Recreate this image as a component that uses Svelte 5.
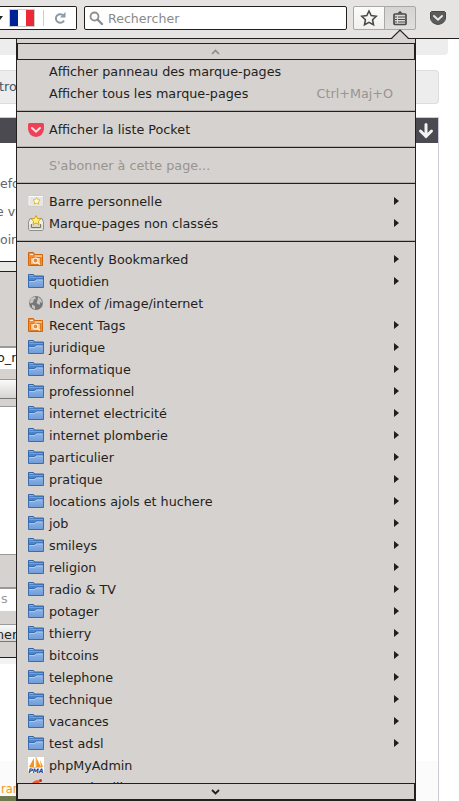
<script lang="ts">
  type Item = { label: string; icon?: string; arrow?: boolean; shortcut?: string; disabled?: boolean };

  const folder = (label: string): Item => ({ label, icon: 'folder', arrow: true });

  // Each group is followed by a separator
  const groups: Item[][] = [
    [
      { label: 'Afficher panneau des marque-pages' },
      { label: 'Afficher tous les marque-pages', shortcut: 'Ctrl+Maj+O' },
    ],
    [{ label: 'Afficher la liste Pocket', icon: 'pocket' }],
    [{ label: "S'abonner à cette page...", disabled: true }],
    [
      { label: 'Barre personnelle', icon: 'toolbar', arrow: true },
      { label: 'Marque-pages non classés', icon: 'unsorted', arrow: true },
    ],
    [
      { label: 'Recently Bookmarked', icon: 'smart', arrow: true },
      folder('quotidien'),
      { label: 'Index of /image/internet', icon: 'globe' },
      { label: 'Recent Tags', icon: 'smart', arrow: true },
      ...[
        'juridique', 'informatique', 'professionnel', 'internet electricité',
        'internet plomberie', 'particulier', 'pratique', 'locations ajols et huchere',
        'job', 'smileys', 'religion', 'radio & TV', 'potager', 'thierry', 'bitcoins',
        'telephone', 'technique', 'vacances', 'test adsl',
      ].map(folder),
      { label: 'phpMyAdmin', icon: 'pma' },
      { label: 'mental suili', icon: 'orange' },
    ],
  ];
</script>

{#snippet itemIcon(name: string)}
  <svg class="icon" viewBox="0 0 16 16">
    {#if name === 'folder'}
      <path d="M.5 13.500V1.500h5l1 1.500h9v6z" fill="#4d84c8" stroke="#3264a8" />
      <path d="M1 2.500h4.500" stroke="#86b3e9" />
      <path d="M1 4.500h14" stroke="#6ea0de" />
      <path d="M.5 14.500V7.500h6l1.500-1.500h7.500v8.500z" fill="url(#folderFill)" stroke="#3a6cb0" />
      <path d="M1.500 8.500h5.500l1.500-1.500h6" fill="none" stroke="#a9caf0" />
    {:else if name === 'smart'}
      <path d="M.5 14.500v-13h5l1 2h8v11z" fill="#f58f35" stroke="#d2650b" />
      <path d="M2.500 13.500v-7h10v7z" fill="#fac084" stroke="#e07a20" />
      <path d="M2 3.500h3M7 5h7" stroke="#fff0dd" />
      <circle cx="7.500" cy="9.500" r="2.500" fill="#e9893a" stroke="#fff3e4" stroke-width="1.200" />
      <path d="m9.500 11.500 2.500 2" stroke="#fff3e4" stroke-width="1.400" />
    {:else if name === 'pocket'}
      <path d="M1.500 2h13Q16 2 16 3.500V8Q15 15.500 8 16 1 15.500 0 8V3.500Q0 2 1.500 2z" fill="#ee4056" />
      <path d="m4 7 4 3.700L12 7" fill="none" stroke="#f4e4e1" stroke-width="2" stroke-linecap="round" />
    {:else if name === 'toolbar'}
      <path d="M.5 2.500h15v11H.5z" fill="#e7e6e4" stroke="#cfccc9" />
      <path d="M1 3.500h14M1 3v9" stroke="#fafafa" />
      <path d="m8.500 4.500 1.200 2 2.300.5-1.500 1.800.2 2.200-2.200-.8-2.200.8.2-2.200L5 7l2.300-.5z" fill="#fffbd9" stroke="#e0be44" />
    {:else if name === 'unsorted'}
      <path d="m.5 7 1.500-3.500h12l1.500 3.500v7l-1 1.500h-13l-1-1.500z" fill="#efefed" stroke="#8f8f8a" />
      <path d="M1.500 9.500h13v4.500h-13z" fill="#d5d5d0" />
      <path d="M3.500 9v3.500h9V9" fill="none" stroke="#777772" />
      <path d="m8 .5 1.500 3 3.300.5-2.400 2.300.6 3.300-3-1.600-3 1.600.6-3.300L3.200 4l3.300-.5z" fill="#fff076" stroke="#d5a514" />
    {:else if name === 'globe'}
      <circle cx="8" cy="8" r="7" fill="#777" />
      <path d="m3 3 4-1.500 1 2-2 1-1 3-3 1L1.500 7zM10 2l3 2 1.500 4-2-1-1 3-3-2 1-3zM4 9.500l3 1.500v3.500l-3-2z" fill="#c4c3c1" />
    {:else if name === 'pma'}
      <path d="M0 0h16v16H0z" fill="#fff" />
      <path d="M6 1 1 10h5zM8 0v10h5zM12 3l3 7h-2z" fill="#f79415" />
      <path d="M8 0v10M2 10.500h12" stroke="#f8c681" />
      <text x="0.500" y="15.700" font-size="6.200" font-weight="bold" font-style="italic" textLength="15" fill="#343477">PMA</text>
    {:else}
      <path d="M3 5q3-4 7.500-4l1.500 4z" fill="#ee5b27" />
      <circle cx="12.500" cy="1.500" r="1.500" fill="#d71d25" />
    {/if}
  </svg>
{/snippet}

<svg class="defs" width="0" height="0">
  <defs>
    <linearGradient id="folderFill" x2="0" y2="1">
      <stop offset="0" stop-color="#8db5e8" />
      <stop offset="1" stop-color="#6e9bd8" />
    </linearGradient>
  </defs>
</svg>

<div class="window">
  <header class="toolbar">
    <div class="urlbar">
      <svg class="caret" width="3" height="4" viewBox="0 0 3 4"><path d="M0 0h3L0 4z" fill="#222" /></svg>
      <div class="flag"><i></i><i></i><i></i></div>
      <svg class="reload" width="12" height="12" viewBox="0 0 12 12">
        <path d="M10 8.500A4.300 4.300 0 1 1 8.800 3" fill="none" stroke="#8a9aa6" stroke-width="2" />
        <path d="M11.500 0v5.500H6z" fill="#8a9aa6" />
      </svg>
    </div>
    <div class="search">
      <svg width="15" height="15" viewBox="0 0 15 15">
        <circle cx="5.500" cy="5.500" r="4" fill="none" stroke="#8e8e8e" stroke-width="1.800" />
        <path d="m8.500 8.500 4.500 4.500" stroke="#8e8e8e" stroke-width="2.400" stroke-linecap="round" />
      </svg>
      <span>Rechercher</span>
    </div>
    <div class="buttons">
      <div class="btn">
        <svg width="18" height="18" viewBox="0 0 18 18">
          <path d="m9 2 2.200 4.600 5 .7-3.600 3.500.9 5L9 13.400l-4.500 2.400.9-5L1.800 7.300l5-.7z" fill="none" stroke="#4a4a4a" stroke-width="1.600" />
        </svg>
      </div>
      <div class="btn open">
        <svg width="16" height="16" viewBox="0 0 16 16">
          <path d="M5 3.500 8 1l3 2.500" fill="#4a4a4a" />
          <rect x="2" y="4" width="12" height="10.500" rx="1" fill="none" stroke="#4a4a4a" stroke-width="1.700" />
          <path d="M3 7h2m1 0h7M3 9.500h2m1 0h7M3 12h2m1 0h7" stroke="#4a4a4a" stroke-width="1.200" />
        </svg>
      </div>
    </div>
    <svg class="pocket" width="16" height="14" viewBox="0 0 16 14">
      <path d="M1.500.5h13l1 1V7Q15 12.500 8 13.500 1 12.500.5 7V1.500z" fill="#5b5b5b" stroke="#484848" />
      <path d="m4 5 4 3.700L12 5" fill="none" stroke="#e8e8e8" stroke-width="2" stroke-linecap="round" />
    </svg>
  </header>

  <div class="page">
    <div class="tab"></div>
    <div class="crumbs">tro</div>
    <section class="panel">
      <div class="panel-head">
        <svg width="16" height="16" viewBox="0 0 16 16">
          <path d="M8 1.500v12M2.500 8 8 13.500 13.500 8" fill="none" stroke="#f3f3f3" stroke-width="3" stroke-linecap="round" />
        </svg>
      </div>
      <div class="copy">
        <p>efo</p>
        <p class="pull">e vu</p>
        <p>oir</p>
      </div>
      <div class="shot">
        <div class="strip"></div>
        <div class="gap"></div>
        <div class="field">o_r</div>
        <div class="small-gap"></div>
        <div class="bevel"></div>
        <div class="ledge"></div>
        <div class="blank"></div>
        <div class="mid"></div>
        <div class="field grey">s</div>
        <div class="fill"></div>
        <div class="bevel short">ner</div>
        <div class="last"></div>
      </div>
      <div class="after"></div>
      <div class="foot"><span>rar</span></div>
    </section>
  </div>

  <div class="menu">
    <svg class="tip" width="20" height="11" viewBox="0 0 20 11">
      <path d="m1 10.500 9-9 9 9V11H1z" fill="#d6d2cf" />
      <path d="M0 9.500h1.500L10 1l8.500 8.500H20" fill="none" stroke="#231f1d" stroke-width="1.200" />
    </svg>
    <div class="scroll up">
      <svg width="9" height="6" viewBox="0 0 9 6"><path d="m1 5 3.500-3.500L8 5" fill="none" stroke="#8f8b88" stroke-width="1.600" /></svg>
    </div>
    <div class="items">
      {#each groups as group, i}
        {#if i > 0}
          <div class="separator"></div>
        {/if}
        {#each group as item}
          <div class="item" class:disabled={item.disabled}>
            <div class="slot">
              {#if item.icon}
                {@render itemIcon(item.icon)}
              {/if}
            </div>
            <span class="label">{item.label}</span>
            {#if item.shortcut}
              <span class="shortcut">{item.shortcut}</span>
            {/if}
            {#if item.arrow}
              <svg class="arrow" width="5" height="8" viewBox="0 0 5 8"><path d="M0 0v8l5-4z" fill="#231f1d" /></svg>
            {/if}
          </div>
        {/each}
      {/each}
    </div>
    <div class="scroll down">
      <svg width="9" height="6" viewBox="0 0 9 6"><path d="m1 1 3.500 3.500L8 1" fill="none" stroke="#231f1d" stroke-width="1.800" /></svg>
    </div>
  </div>
</div>

<style>
  .window {
    position: relative;
    display: flex;
    flex-direction: column;
    width: 459px;
    height: 801px;
    overflow: hidden;
    background: #fff;
    font-family: 'DejaVu Sans', sans-serif;
    font-size: 12.75px;
    color: #231f1d;
  }

  .defs {
    position: absolute;
  }

  svg {
    display: block;
    flex: none;
  }

  /* Browser toolbar */
  .toolbar {
    display: flex;
    align-items: flex-start;
    flex: none;
    box-sizing: border-box;
    height: 39px;
    padding-top: 6px;
    background: #e5e4e2;
    border-bottom: 1px solid #231f1d;
  }

  .urlbar,
  .search {
    display: flex;
    align-items: center;
    box-sizing: border-box;
    height: 24px;
    background: #fff;
    border: 1px solid #231f1d;
    border-radius: 2px;
  }

  .urlbar {
    width: 77px;
    border-left: none;
    border-radius: 0 2px 2px 0;
  }

  .flag {
    display: flex;
    box-sizing: border-box;
    width: 26px;
    height: 18px;
    margin-left: 6px;
    border: 1px solid #ccc;
  }

  .flag i {
    flex: 1;
    background: #fff;
  }

  .flag i:first-child {
    background: #012395;
  }

  .flag i:last-child {
    background: #ed2939;
  }

  .reload {
    box-sizing: content-box;
    margin-left: 8px;
    padding: 2px 0 2px 10px;
    border-left: 1px solid #ccc;
  }

  .search {
    width: 263px;
    margin-left: 7px;
    padding-left: 4px;
    gap: 4px;
    font-size: 12.6px;
    color: #8a8a8a;
  }

  .buttons {
    display: flex;
    margin-left: 6px;
  }

  .btn {
    display: flex;
    align-items: center;
    justify-content: center;
    box-sizing: border-box;
    width: 32px;
    height: 24px;
    background: linear-gradient(#fbfbfa, #f1f0ef);
    border: 1px solid #aaa8a6;
    border-radius: 2px 0 0 2px;
  }

  .btn.open {
    background: linear-gradient(#d5d4d2, #e0dfdd);
    margin-left: -1px;
    border-radius: 0 2px 2px 0;
  }

  .pocket {
    margin: 5px 0 0 14px;
  }

  /* Web page under the menu */
  .page {
    display: flex;
    flex-direction: column;
    flex: 1;
    width: 448px;
  }

  .tab {
    height: 16px;
    background: #ededed;
    border-radius: 0 0 4px 0;
  }

  .crumbs {
    box-sizing: border-box;
    width: 439px;
    height: 34px;
    margin-top: 15px;
    background: #ededed;
    border: 1px solid #ddd;
    border-left: none;
    border-radius: 0 4px 4px 0;
    line-height: 32px;
    text-indent: -1px;
    color: #41566a;
  }

  .panel {
    display: flex;
    flex-direction: column;
    flex: 1;
    box-sizing: border-box;
    width: 439px;
    margin-top: 13px;
    border-top: 1px solid #cacbd9;
    border-right: 1px solid #cacbdb;
  }

  .panel-head {
    display: flex;
    align-items: center;
    justify-content: flex-end;
    box-sizing: border-box;
    height: 25px;
    padding-right: 4px;
    background: #4b4a50;
  }

  .copy {
    height: 118px;
    padding-top: 27px;
    box-sizing: border-box;
    font-size: 12.5px;
    color: #666;
  }

  .copy p {
    margin: 0;
    line-height: 28px;
  }

  .copy .pull {
    text-indent: -4px;
  }

  .shot {
    width: 16px;
    overflow: hidden;
    background: #d6d2cf;
    white-space: nowrap;
  }

  .strip {
    height: 9px;
    background: #e8e8e6;
    border: solid #231f1d;
    border-width: 1px 0;
  }

  .gap {
    height: 74px;
  }

  .field {
    height: 21px;
    background: #fff;
    border-top: 2px solid #9b9896;
    line-height: 20px;
    text-indent: -3px;
  }

  .field.grey {
    color: #999;
    text-indent: 1px;
    height: 22px;
  }

  .small-gap {
    height: 10px;
  }

  .bevel {
    height: 18px;
    background: linear-gradient(#fafafa, #d6d4d1);
    border-bottom: 1px solid #777;
    border-top: 1px solid #999;
  }

  .bevel.short {
    height: 16px;
    line-height: 20px;
    text-indent: -4px;
  }

  .ledge {
    height: 7px;
    border-bottom: 1px solid #999;
  }

  .blank {
    height: 147px;
    background: #fff;
  }

  .mid {
    height: 32px;
    border-top: 1px solid #999;
  }

  .fill {
    height: 13px;
  }

  .last {
    height: 15px;
    border-bottom: 1px solid #231f1d;
  }

  .after {
    height: 6px;
    width: 16px;
    background: #f3f3f3;
  }

  .foot {
    display: flex;
    flex-direction: column;
    justify-content: flex-end;
    flex: 1;
    background: linear-gradient(#fff 97px, #fbfbfb 97px);
    color: #f39a11;
    font-size: 11.5px;
    text-indent: 1px;
  }

  .foot span {
    width: 16px;
    line-height: 14px;
    border-bottom: 5px solid #6f7a4d;
  }

  /* Bookmarks menu */
  .menu {
    position: absolute;
    top: 39px;
    left: 16px;
    display: flex;
    flex-direction: column;
    box-sizing: border-box;
    width: 400px;
    height: 762px;
    padding-top: 4px;
    background: #d6d2cf;
    border: solid #231f1d;
    border-width: 0 1px 1px;
  }

  .tip {
    position: absolute;
    top: -10px;
    left: 373px;
  }

  .scroll {
    display: flex;
    align-items: center;
    justify-content: center;
    flex: none;
    box-sizing: border-box;
    height: 17px;
    padding-right: 1px;
    border: 1px solid #231f1d;
  }

  .items {
    flex: 1;
    min-height: 0;
    overflow: hidden;
  }

  .item {
    display: flex;
    align-items: center;
    height: 22px;
    padding: 0 16px 0 11px;
  }

  .slot {
    width: 21px;
    flex: none;
  }

  .icon {
    width: 16px;
    height: 16px;
  }

  .label {
    flex: 1;
    white-space: nowrap;
  }

  .shortcut {
    margin-right: 6px;
    color: #98948f;
  }

  .disabled {
    color: #98948f;
  }

  .separator {
    box-sizing: border-box;
    height: 14px;
    border-top: 6px solid #d6d2cf;
    background: linear-gradient(#b3afac 1px, #231f1d 1px, #231f1d 2px, #d6d2cf 2px);
  }
</style>
